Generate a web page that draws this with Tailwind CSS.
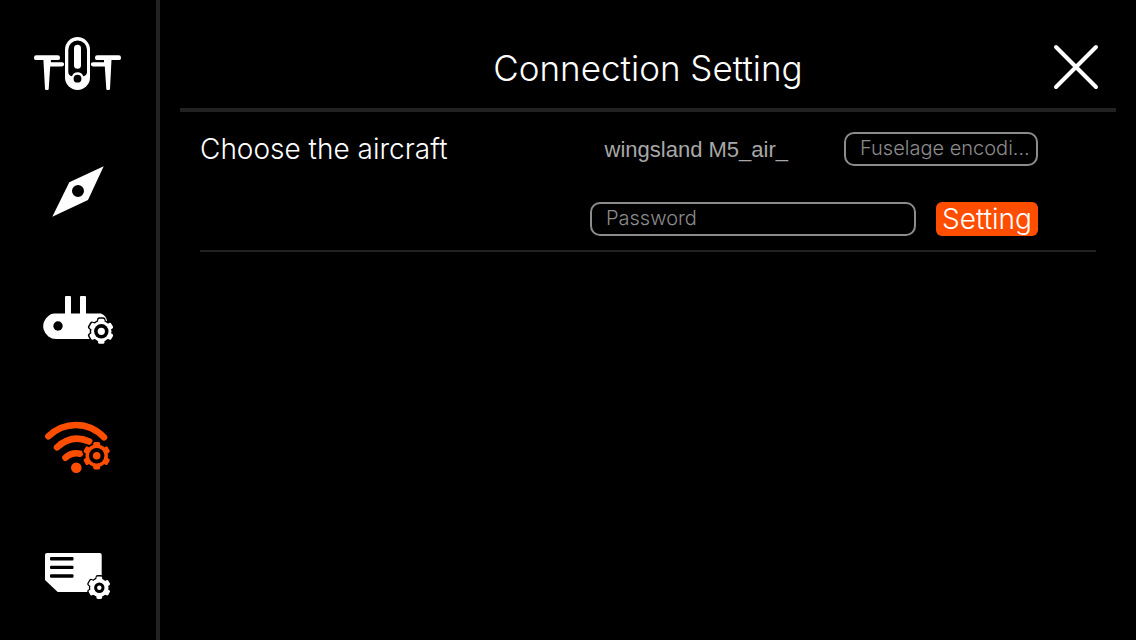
<!DOCTYPE html>
<html lang="en">
<head>
    <meta charset="UTF-8">
    <meta name="viewport" content="width=device-width, initial-scale=1.0">
    <title>Connection Setting</title>
    <script src="https://cdn.jsdelivr.net/npm/@tailwindcss/browser@4"></script>
</head>
<body class="flex min-h-screen bg-black text-white font-['Inter',sans-serif]">
    <!-- Shared gear shape -->
    <svg class="hidden" aria-hidden="true">
        <defs>
            <g id="gear">
                <circle r="10.6"/>
                <rect x="-3.3" y="-13" width="6.6" height="26" rx="1.6"/>
                <rect x="-3.3" y="-13" width="6.6" height="26" rx="1.6" transform="rotate(60)"/>
                <rect x="-3.3" y="-13" width="6.6" height="26" rx="1.6" transform="rotate(120)"/>
            </g>
        </defs>
    </svg>

    <!-- Sidebar -->
    <nav class="grid w-40 shrink-0 grid-rows-5 border-r-4 border-[#222222]">
        <a href="#" aria-label="Aircraft" class="flex items-center justify-center">
            <svg class="h-14 w-22" viewBox="34 36 88 56" fill="currentColor">
                <rect x="34" y="55.3" width="26" height="4.8" rx="2.2"/>
                <path d="M43.3 58h7.6v4.2H62a2 2 0 0 1 0 4.3H50.2L48.7 89q-.1 1-1 1h-1.6q-1 0-1.1-1z"/>
                <rect x="95" y="55.3" width="26" height="4.8" rx="2.2"/>
                <path d="M111.6 58H104v4.2H93a2 2 0 0 0 0 4.3h11.8l1.5 22.5q.1 1 1 1h1.6q1 0 1.1-1z"/>
                <rect x="65" y="37" width="25" height="53" rx="12.5"/>
                <path d="M68.3 49.8a9.3 9.3 0 0 1 18.7 0V72q0 3.5-3.7 4.2A6 6 0 0 0 72 76.2Q68.3 75.5 68.3 72z" fill="#000"/>
                <circle cx="77.5" cy="78.7" r="5.4"/>
                <circle cx="77.5" cy="78.7" r="3.9" fill="#000"/>
                <rect x="74" y="44.7" width="7" height="24" rx="3.5"/>
            </svg>
        </a>
        <a href="#" aria-label="Compass" class="flex items-center justify-center">
            <svg class="h-13 w-13" viewBox="52 166 52 52" fill="currentColor">
                <path fill-rule="evenodd" d="M103.7 166.3 88 200 52.3 216.7 69.3 182.3zM78 185a6 6 0 1 0 0 12 6 6 0 0 0 0-12z"/>
            </svg>
        </a>
        <a href="#" aria-label="Remote controller" class="flex items-center justify-center">
            <svg class="h-13 w-18" viewBox="42 294 72 52" fill="currentColor">
                <rect x="65" y="296" width="6" height="20" rx="1"/>
                <rect x="80" y="296" width="6" height="20" rx="1"/>
                <path d="M56 313.5h45q5 2 6 7v18.5H56a12.8 12.8 0 0 1-7-23.5q2-2.5 7-2z"/>
                <circle cx="58" cy="326" r="4.7" fill="#000"/>
                <rect x="101" y="330" width="12" height="12" fill="#000"/>
                <g transform="translate(101.3 331.3)">
                    <use href="#gear" fill="#000" stroke="#000" stroke-width="2"/>
                    <use href="#gear" transform="scale(.96)"/>
                    <circle r="7.2" fill="#000"/>
                    <circle r="3.6"/>
                </g>
            </svg>
        </a>
        <a href="#" aria-label="Wi-Fi" aria-current="page" class="flex items-center justify-center text-[#ff4e00]">
            <svg class="h-14 w-17" viewBox="44 420 68 56" fill="currentColor">
                <g fill="none" stroke="currentColor" stroke-width="6.5" stroke-linecap="round">
                    <path d="M48.3 436.3C64 421.5 88 420.5 104 437.3"/>
                    <path d="M57 447.3C67 438 78 436.5 89.3 441.5"/>
                    <path d="M65.5 457.7C70 453.5 74 452.5 80 453.7"/>
                </g>
                <circle cx="76.3" cy="467.7" r="5.3"/>
                <g transform="translate(96.7 455.7)">
                    <use href="#gear" fill="#000" stroke="#000" stroke-width="4"/>
                    <use href="#gear" transform="scale(1.06)"/>
                    <circle r="7.7" fill="#000"/>
                    <circle r="3.8"/>
                </g>
            </svg>
        </a>
        <a href="#" aria-label="SD card" class="flex items-center justify-center">
            <svg class="h-12 w-17" viewBox="44 552 68 48" fill="currentColor">
                <path d="M47 553h52.7q2 0 2 2v37h-44L45 580v-25q0-2 2-2z"/>
                <g fill="#000">
                    <rect x="50" y="557" width="23.5" height="3.4" rx="1"/>
                    <rect x="50" y="565.7" width="23.5" height="3.4" rx="1"/>
                    <rect x="50" y="574.3" width="23.5" height="3.4" rx="1"/>
                </g>
                <g transform="translate(99.3 587.7)">
                    <use href="#gear" fill="#000" stroke="#000" stroke-width="2" transform="scale(.9)"/>
                    <use href="#gear" transform="scale(.87)"/>
                    <circle r="5.2" fill="#000"/>
                    <circle r="2.2"/>
                </g>
            </svg>
        </a>
    </nav>

    <main class="min-w-0 flex-1 px-5">
        <!-- Header -->
        <header class="grid h-28 grid-cols-[80px_1fr_80px] items-center border-b-4 border-[#222222] pt-6.5">
            <h1 class="col-start-2 pt-0.5 text-center text-[35px] leading-10 font-[350]">Connection Setting</h1>
            <button type="button" aria-label="Close" class="justify-self-center">
                <svg class="h-12 w-12" viewBox="0 0 48 48" fill="none" stroke="currentColor" stroke-width="4" stroke-linecap="round">
                    <path d="M4 4l40 40M44 4L4 44"/>
                </svg>
            </button>
        </header>

        <!-- Connection form -->
        <form class="mx-5 flex flex-col gap-9 border-b-2 border-[#222222] pt-5 pr-[58px] pb-3.5">
            <div class="flex h-8.5 items-center">
                <label for="encoding" class="flex-1 text-[28px] font-[350]">Choose the aircraft</label>
                <span class="mr-14 font-['Liberation_Sans',sans-serif] text-[22px] text-[#a8a8a8]">wingsland M5_air_</span>
                <input id="encoding" type="text" placeholder="Fuselage encoding" class="h-8.5 w-48.5 rounded-[10px] border-2 border-[#8c8c8c] pb-0.5 pl-3.5 pr-1 text-xl font-[350] text-ellipsis placeholder:text-[#8c8c8c]">
            </div>
            <div class="flex h-8.5 items-center justify-end gap-5">
                <input type="password" aria-label="Password" placeholder="Password" class="h-8.5 w-[326px] rounded-[10px] border-2 border-[#8c8c8c] px-3.5 pb-0.5 text-xl font-[350] placeholder:text-[#8c8c8c]">
                <button type="submit" class="h-8.5 w-25.5 rounded-md bg-[#ff4e00] text-[28px] leading-8 font-light">Setting</button>
            </div>
        </form>
    </main>
</body>
</html>
